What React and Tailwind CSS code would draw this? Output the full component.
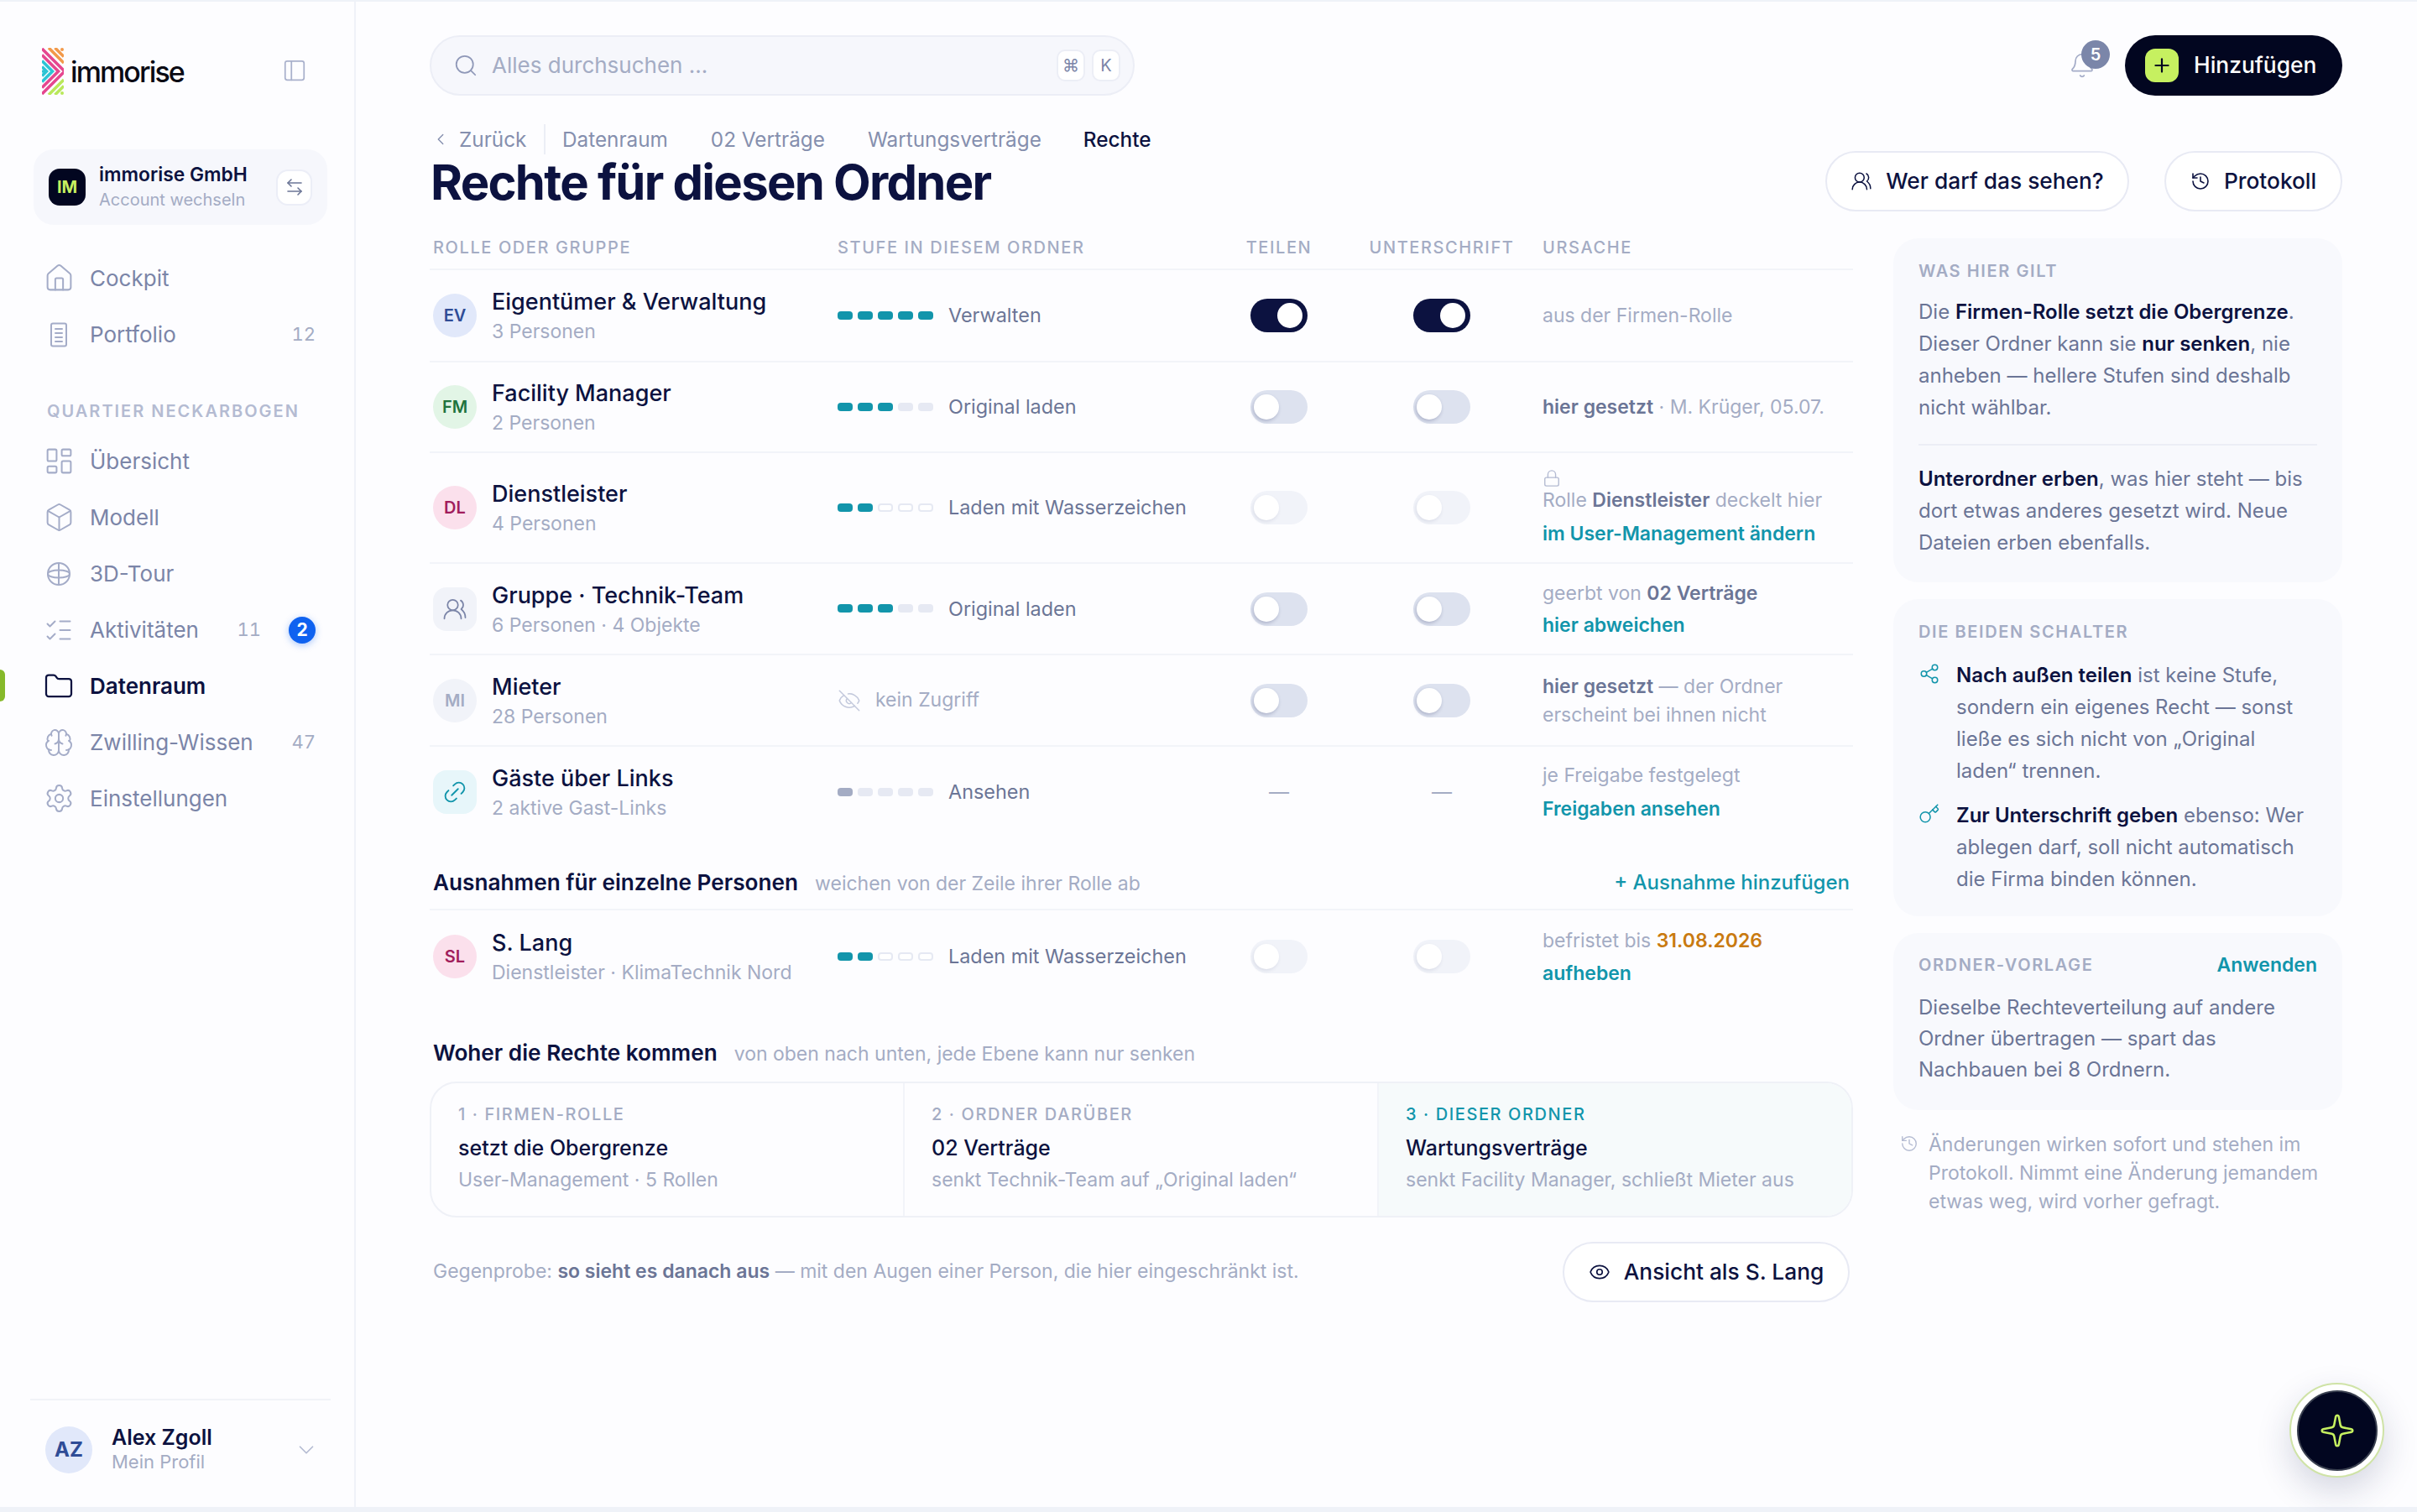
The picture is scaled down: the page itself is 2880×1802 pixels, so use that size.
import React from 'react';
import {
  Home, LayoutDashboard, Box, ListChecks, Folder, Brain, Settings, ArrowLeftRight, PanelLeft,
  Search, Bell, Plus, UsersRound, History, Lock, EyeOff, Link2, Share2, Key, Eye, Sparkle,
  ChevronLeft, ChevronDown,
} from 'lucide-react';

const Logo = () => (
  <svg width="26" height="56" viewBox="0 0 26 56" fill="none" strokeWidth="3.6" className="shrink-0">
    <g stroke="#e5468f">
      <path d="M0 1 L27 28 L0 55" />
      <path d="M0 8.5 L19.5 28 L0 47.5" />
    </g>
    <g stroke="#2cc4d4">
      <path d="M0 15.5 L12.5 28 L0 40.5" />
      <path d="M0 22.5 L5.5 28 L0 33.5" />
    </g>
    <circle cx="1.5" cy="28" r="1.8" fill="#2cc4d4" />
    <g stroke="#f2994a">
      <path d="M8 0 L26 18" />
      <path d="M15.5 0 L26 10.5" />
    </g>
    <circle cx="24" cy="2" r="2" fill="#f2994a" />
    <g stroke="#b9e85a">
      <path d="M8 56 L26 38" />
      <path d="M15.5 56 L26 45.5" />
    </g>
    <circle cx="24" cy="54" r="2" fill="#b9e85a" />
  </svg>
);

const PortfolioIcon = () => (
  <svg width="28" height="30" viewBox="0 0 28 30" fill="none" stroke="currentColor" strokeWidth="2" strokeLinecap="round" className="shrink-0">
    <rect x="5" y="1.5" width="18" height="27" rx="2" />
    <path d="M10 8h8M10 13h8M10 18h8M10 23h8" />
  </svg>
);

const TourIcon = () => (
  <svg width="28" height="28" viewBox="0 0 28 28" fill="none" stroke="currentColor" strokeWidth="2" className="shrink-0">
    <circle cx="14" cy="14" r="13" />
    <ellipse cx="14" cy="14" rx="13" ry="4.5" />
    <path d="M14 1v26" />
  </svg>
);

const nav1 = [
  { label: 'Cockpit', icon: <Home size={37} strokeWidth={1.3} className="shrink-0" /> },
  { label: 'Portfolio', icon: <PortfolioIcon />, count: '12' },
];

const nav2 = [
  { label: 'Übersicht', icon: <LayoutDashboard size={37} strokeWidth={1.3} className="shrink-0" /> },
  { label: 'Modell', icon: <Box size={37} strokeWidth={1.3} className="shrink-0" /> },
  { label: '3D-Tour', icon: <TourIcon /> },
  { label: 'Aktivitäten', icon: <ListChecks size={36} strokeWidth={1.3} className="shrink-0" />, count: '11', badge: '2' },
  { label: 'Datenraum', icon: <Folder size={36} strokeWidth={1.5} className="shrink-0" />, active: true },
  { label: 'Zwilling-Wissen', icon: <Brain size={36} strokeWidth={1.3} className="shrink-0" />, count: '47' },
  { label: 'Einstellungen', icon: <Settings size={37} strokeWidth={1.3} className="shrink-0" /> },
];

const NavItem = ({ item }) => (
  <div className={`relative flex h-[67px] items-center pl-[56px] pr-[46px] ${item.active ? 'font-semibold text-[#0c1240]' : 'text-[#7b85a8]'}`}>
    {item.active && <div className="absolute left-0 top-[14px] h-[38px] w-[6px] rounded-r-md bg-[#86b92a]" />}
    <span className={`flex w-[28px] shrink-0 items-center justify-center ${item.active ? 'text-[#0c1240]' : 'text-[#a4acc8]'}`}>{item.icon}</span>
    <span className="ml-[23px] text-[26px]">{item.label}</span>
    <span className="flex-1" />
    {item.count && <span className={`text-[22px] tabular-nums text-[#a4acc4] ${item.badge ? 'mr-[33px]' : ''}`}>{item.count}</span>}
    {item.badge && (
      <span className="flex h-[32px] w-[32px] items-center justify-center rounded-full bg-[#0f62f0] text-[21px] font-bold text-white shadow-[0_2px_8px_rgba(15,98,240,0.35)]">
        {item.badge}
      </span>
    )}
  </div>
);

const Sidebar = () => (
  <aside className="flex w-[424px] shrink-0 flex-col border-r-2 border-[#eff2f8]">
    <div className="mt-[55px] flex h-[56px] shrink-0 items-center pl-[50px] pr-[56px]">
      <Logo />
      <span className="ml-[8px] text-[34px] font-medium tracking-[-0.055em] text-[#0a0a14]">immorise</span>
      <span className="flex-1" />
      <PanelLeft size={30} strokeWidth={1.4} className="-mt-[2px] text-[#a9b1cc]" />
    </div>
    <div className="ml-[40px] mr-[32px] mt-[65px] flex h-[90px] items-center rounded-[24px] bg-[#f6f7fc] px-[18px]">
      <div className="flex h-[44px] w-[44px] items-center justify-center rounded-[13px] bg-[#020620] text-[20px] font-bold text-[#c6f060]">IM</div>
      <div className="ml-[16px] flex-1">
        <div className="text-[22.8px] font-semibold leading-[30px] text-[#0c1240]">immorise GmbH</div>
        <div className="text-[20px] leading-[30px] text-[#a4acc4]">Account wechseln</div>
      </div>
      <div className="flex h-[43px] w-[43px] items-center justify-center rounded-[14px] border-2 border-[#eceef7] bg-white text-[#6b7596]">
        <ArrowLeftRight size={24} strokeWidth={1.6} />
      </div>
    </div>
    <div className="mt-[30px]">
      {nav1.map((item) => <NavItem key={item.label} item={item} />)}
    </div>
    <div className="ml-[56px] mt-[41px] flex h-[34px] items-center text-[20px] font-semibold tracking-[0.1em] text-[#b4bbd2]">QUARTIER NECKARBOGEN</div>
    <div className="mt-[9px]">
      {nav2.map((item) => <NavItem key={item.label} item={item} />)}
    </div>
    <div className="flex-1" />
    <div className="mb-[40px] ml-[36px] mr-[28px] flex h-[89px] items-end border-t-2 border-[#f1f3f8] pl-[18px] pr-[14px]">
      <div className="flex h-[56px] w-[56px] items-center justify-center rounded-full bg-[#e1e8fa] text-[24px] font-bold text-[#2f4c96]">AZ</div>
      <div className="ml-[23px] flex-1">
        <div className="text-[25px] font-semibold leading-[30px] text-[#0c1240]">Alex Zgoll</div>
        <div className="text-[22px] leading-[28px] text-[#a4acc4]">Mein Profil</div>
      </div>
      <ChevronDown size={30} strokeWidth={1.4} className="mb-[13px] text-[#b4bbd2]" />
    </div>
  </aside>
);

const Bars = ({ level, outlined, grey }) => (
  <div className="flex w-[114px] shrink-0 gap-[6px]">
    {[0, 1, 2, 3, 4].map((i) => {
      let cls = 'bg-[#e6e9f3]';
      if (i < level) cls = grey ? 'bg-[#a4acc4]' : 'bg-[#1295ab]';
      else if (outlined) cls = 'border-2 border-[#e6e9f3] bg-white';
      return <span key={i} className={`h-[10px] w-[18px] rounded-[4px] ${cls}`} />;
    })}
  </div>
);

const Toggle = ({ mode }) => {
  if (mode === 'none') return <span className="text-[24px] text-[#a4acc4]">—</span>;
  if (mode === 'on') {
    return (
      <span className="flex h-[40px] w-[68px] items-center justify-end rounded-full bg-[#0c1240] pr-[6px]">
        <span className="h-[30px] w-[30px] rounded-full bg-white" />
      </span>
    );
  }
  return (
    <span className={`flex h-[40px] w-[68px] items-center rounded-full pl-[4px] ${mode === 'locked' ? 'bg-[#f1f3f9]' : 'bg-[#dde2ef]'}`}>
      <span className={`h-[30px] w-[30px] rounded-full bg-white ${mode === 'locked' ? 'shadow-[-1px_2px_4px_rgba(30,40,90,0.1)]' : 'shadow-[-1px_2px_4px_rgba(30,40,90,0.25)]'}`} />
    </span>
  );
};

const Link_ = ({ children }) => <div className="font-semibold text-[#1295ab]">{children}</div>;
const Strong = ({ children }) => <span className="font-semibold text-[#6b7596]">{children}</span>;

const gridCols = 'grid grid-cols-[486px_444px_164px_224px_378px] items-center';

const Row = ({ r }) => (
  <div className={`${gridCols} ${r.h} ${r.noLine ? '' : 'border-b-2 border-[#f2f4f9]'}`}>
    <div className="flex items-center pl-[4px]">
      <div className={`flex h-[52px] w-[52px] items-center justify-center text-[20px] font-semibold ${r.avatar}`}>{r.initials || r.icon}</div>
      <div className="ml-[18px]">
        <div className="text-[27px] font-medium leading-[38px] text-[#0c1240]">{r.title}</div>
        <div className="text-[23px] leading-[32px] text-[#a4acc4]">{r.sub}</div>
      </div>
    </div>
    <div className="flex items-center">
      {r.noAccess ? (
        <>
          <EyeOff size={28} strokeWidth={1.3} className="text-[#c3c9dc]" />
          <span className="ml-[17px] text-[23px] text-[#a4acc4]">kein Zugriff</span>
        </>
      ) : (
        <>
          <Bars level={r.level} outlined={r.outlined} grey={r.grey} />
          <span className="ml-[18px] text-[23.4px] text-[#6b7596]">{r.stufe}</span>
        </>
      )}
    </div>
    <div className="flex justify-center"><Toggle mode={r.toggle} /></div>
    <div className="flex justify-center"><Toggle mode={r.toggle} /></div>
    <div className="pl-[8px] text-[23px] text-[#a4acc4]">{r.cause}</div>
  </div>
);

const rows = [
  {
    h: 'h-[110px]', initials: 'EV', avatar: 'rounded-full bg-[#e1e8fa] text-[#2f4c96]', title: 'Eigentümer & Verwaltung', sub: '3 Personen',
    level: 5, stufe: 'Verwalten', toggle: 'on', cause: <div>aus der Firmen-Rolle</div>,
  },
  {
    h: 'h-[108px]', initials: 'FM', avatar: 'rounded-full bg-[#e2f5e6] text-[#20733d]', title: 'Facility Manager', sub: '2 Personen',
    level: 3, stufe: 'Original laden', toggle: 'off', cause: <div><Strong>hier gesetzt</Strong> · M. Krüger, 05.07.</div>,
  },
  {
    h: 'h-[132px]', initials: 'DL', avatar: 'rounded-full bg-[#fbe0ec] text-[#a11d5c]', title: 'Dienstleister', sub: '4 Personen',
    level: 2, outlined: true, stufe: 'Laden mit Wasserzeichen', toggle: 'locked',
    cause: (
      <div>
        <Lock size={22} strokeWidth={1.5} className="text-[#b4bbd2]" />
        <div className="leading-[30px]">Rolle <Strong>Dienstleister</Strong> deckelt hier</div>
        <div className="mt-[10px] leading-[30px]"><Link_>im User-Management ändern</Link_></div>
      </div>
    ),
  },
  {
    h: 'h-[109px]', icon: <UsersRound size={30} strokeWidth={1.4} className="text-[#7b85a8]" />, avatar: 'rounded-[16px] bg-[#f1f3f9]', title: 'Gruppe · Technik-Team', sub: '6 Personen · 4 Objekte',
    level: 3, stufe: 'Original laden', toggle: 'off',
    cause: <div><div className="leading-[32px]">geerbt von <Strong>02 Verträge</Strong></div><div className="mt-[6px] leading-[32px]"><Link_>hier abweichen</Link_></div></div>,
  },
  {
    h: 'h-[109px]', initials: 'MI', avatar: 'rounded-full bg-[#f1f3f9] text-[#a4acc4]', title: 'Mieter', sub: '28 Personen',
    noAccess: true, toggle: 'off',
    cause: <div className="leading-[34px]"><Strong>hier gesetzt</Strong> — der Ordner<br />erscheint bei ihnen nicht</div>,
  },
  {
    h: 'h-[108px]', noLine: true, icon: <Link2 size={32} strokeWidth={1.4} className="-rotate-45 text-[#1295ab]" />, avatar: 'rounded-[16px] bg-[#e7f6fa]', title: 'Gäste über Links', sub: '2 aktive Gast-Links',
    level: 1, grey: true, stufe: 'Ansehen', toggle: 'none',
    cause: <div><div className="leading-[32px]">je Freigabe festgelegt</div><div className="mt-[8px] leading-[32px]"><Link_>Freigaben ansehen</Link_></div></div>,
  },
];

const langRow = {
  h: 'h-[110px]', noLine: true, initials: 'SL', avatar: 'rounded-full bg-[#fbe0ec] text-[#a11d5c]', title: 'S. Lang', sub: 'Dienstleister · KlimaTechnik Nord',
  level: 2, outlined: true, stufe: 'Laden mit Wasserzeichen', toggle: 'locked',
  cause: <div><div className="leading-[32px]">befristet bis <span className="font-semibold text-[#c97a10]">31.08.2026</span></div><div className="mt-[7px] leading-[32px]"><Link_>aufheben</Link_></div></div>,
};

const levels = [
  { label: '1 · FIRMEN-ROLLE', title: 'setzt die Obergrenze', sub: 'User-Management · 5 Rollen', w: 'w-[564px]', lc: 'text-[#a4acc4]', bg: 'border-r-2 border-[#f2f4f9]' },
  { label: '2 · ORDNER DARÜBER', title: '02 Verträge', sub: 'senkt Technik-Team auf „Original laden“', w: 'w-[565px]', lc: 'text-[#a4acc4]', bg: 'border-r-2 border-[#f2f4f9]' },
  { label: '3 · DIESER ORDNER', title: 'Wartungsverträge', sub: 'senkt Facility Manager, schließt Mieter aus', w: 'flex-1', lc: 'text-[#1295ab]', bg: 'bg-[#f6fafb]' },
];

const panelLabel = 'text-[20px] font-semibold tracking-[0.08em] text-[#a4acc4]';
const B = ({ children }) => <span className="font-semibold text-[#0c1240]">{children}</span>;

const RightColumn = () => (
  <div className="w-[535px] shrink-0">
    <div className="h-[410px] rounded-[30px] bg-[#f8f9fd] px-[30px] pt-[26px] text-[24px] leading-[38px] text-[#6b7596]">
      <div className={`${panelLabel} leading-[26px]`}>WAS HIER GILT</div>
      <div className="mt-[17px] border-b-2 border-[#eceef6] pb-[24px]">
        Die <B>Firmen-Rolle setzt die Obergrenze</B>.<br />
        Dieser Ordner kann sie <B>nur senken</B>, nie<br />
        anheben — hellere Stufen sind deshalb<br />
        nicht wählbar.
      </div>
      <div className="mt-[21px]">
        <B>Unterordner erben</B>, was hier steht — bis<br />
        dort etwas anderes gesetzt wird. Neue<br />
        Dateien erben ebenfalls.
      </div>
    </div>
    <div className="mt-[20px] h-[378px] rounded-[30px] bg-[#f8f9fd] px-[30px] pt-[26px] text-[24px] leading-[38px] text-[#6b7596]">
      <div className={`${panelLabel} leading-[26px]`}>DIE BEIDEN SCHALTER</div>
      <div className="mt-[20px] flex">
        <Share2 size={26} strokeWidth={1.4} className="mr-[19px] mt-[4px] shrink-0 text-[#1295ab]" />
        <div>
          <B>Nach außen teilen</B> ist keine Stufe,<br />
          sondern ein eigenes Recht — sonst<br />
          ließe es sich nicht von „Original<br />
          laden“ trennen.
        </div>
      </div>
      <div className="mt-[15px] flex">
        <Key size={26} strokeWidth={1.4} className="mr-[19px] mt-[4px] shrink-0 text-[#1295ab]" />
        <div>
          <B>Zur Unterschrift geben</B> ebenso: Wer<br />
          ablegen darf, soll nicht automatisch<br />
          die Firma binden können.
        </div>
      </div>
    </div>
    <div className="mt-[20px] h-[211px] rounded-[30px] bg-[#f8f9fd] px-[30px] pt-[24px] text-[24px] leading-[37px] text-[#6b7596]">
      <div className="flex items-center justify-between leading-[28px]">
        <span className={panelLabel}>ORDNER-VORLAGE</span>
        <span className="text-[23px] font-semibold text-[#1295ab]">Anwenden</span>
      </div>
      <div className="mt-[18px]">
        Dieselbe Rechteverteilung auf andere<br />
        Ordner übertragen — spart das<br />
        Nachbauen bei 8 Ordnern.
      </div>
    </div>
    <div className="mt-[24px] flex pl-[8px] text-[23px] leading-[34px] text-[#a4acc4]">
      <History size={22} strokeWidth={1.5} className="mt-[5px] shrink-0 text-[#b4bbd2]" />
      <div className="ml-[12px]">
        Änderungen wirken sofort und stehen im<br />
        Protokoll. Nimmt eine Änderung jemandem<br />
        etwas weg, wird vorher gefragt.
      </div>
    </div>
  </div>
);

const App = () => (
  <div className="relative flex h-[1802px] w-[2880px] flex-col overflow-hidden bg-[#eff2f8] pb-[6px] pt-[2px] font-['Inter',sans-serif]">
    <div className="flex min-h-0 flex-1 bg-[#fdfdff]">
      <Sidebar />
      <main className="min-w-0 flex-1 pl-[88px] pr-[89px]">
        {/* Suche und Aktionen */}
        <div className="mt-[40px] flex h-[72px] items-center">
          <div className="flex h-full w-[840px] items-center rounded-full border-2 border-[#eceef6] bg-[#f6f7fc] pl-[26px] pr-[15px]">
            <Search size={30} strokeWidth={1.4} className="text-[#8f98b8]" />
            <span className="-mt-[2px] ml-[16px] flex-1 text-[26px] text-[#a4acc4]">Alles durchsuchen ...</span>
            <span className="flex h-[38px] w-[34px] items-center justify-center rounded-[10px] border-2 border-[#eceef6] bg-white text-[20px] text-[#7b85a8]">⌘</span>
            <span className="ml-[8px] flex h-[38px] w-[34px] items-center justify-center rounded-[10px] border-2 border-[#eceef6] bg-white text-[20px] text-[#7b85a8]">K</span>
          </div>
          <div className="flex-1" />
          <div className="relative mr-[18px] h-[72px] w-[47px]">
            <Bell size={32} strokeWidth={1.3} className="absolute -left-[2px] top-[20px] text-[#a4acc8]" />
            <span className="absolute left-[13px] top-[6px] flex h-[34px] w-[34px] items-center justify-center rounded-full bg-[#7b86a9] text-[20px] font-semibold text-white">5</span>
          </div>
          <div className="flex h-full w-[259px] items-center rounded-full bg-[#020620] pl-[24px]">
            <span className="flex h-[40px] w-[40px] items-center justify-center rounded-[12px] bg-[#c6f060] text-[#020620]"><Plus size={26} strokeWidth={2} /></span>
            <span className="ml-[18px] text-[26.4px] font-medium text-white">Hinzufügen</span>
          </div>
        </div>

        {/* Kopf */}
        <div className="flex h-[170px] justify-between pt-[34px]">
          <div>
            <div className="flex h-[36px] items-center text-[24.3px] text-[#858fae]">
              <ChevronLeft size={22} strokeWidth={1.5} className="ml-[2px]" />
              <span className="ml-[11px] w-[103px] border-r-2 border-[#eceef6] leading-[36px]">Zurück</span>
              <span className="ml-[20px]">Datenraum</span>
              <span className="ml-[51px]">02 Verträge</span>
              <span className="ml-[51px]">Wartungsverträge</span>
              <span className="ml-[50px] font-medium text-[#0c1240]">Rechte</span>
            </div>
            <h1 className="-mt-[2px] ml-[1px] text-[58px] font-bold leading-[70px] tracking-[-0.03em] text-[#0c1240]">Rechte für diesen Ordner</h1>
          </div>
          <div className="mt-[32px] flex gap-[42px]">
            <div className="flex h-[72px] w-[362px] items-center justify-center rounded-full border-2 border-[#e8eaf4] bg-white text-[26.3px] font-medium text-[#0c1240]">
              <UsersRound size={26} strokeWidth={1.4} className="mr-[16px]" />Wer darf das sehen?
            </div>
            <div className="flex h-[72px] w-[212px] items-center justify-center rounded-full border-2 border-[#e8eaf4] bg-white text-[26.3px] font-medium text-[#0c1240]">
              <History size={24} strokeWidth={1.6} className="mr-[16px]" />Protokoll
            </div>
          </div>
        </div>

        <div className="flex justify-between">
          {/* Tabelle */}
          <div className="w-[1696px]">
            <div className={`${gridCols} h-[38px] border-b-2 border-[#f2f4f9] pb-[14px] text-[20px] font-medium leading-[22px] tracking-[0.08em] text-[#a4acc4]`}>
              <div className="pl-[4px]">ROLLE ODER GRUPPE</div>
              <div>STUFE IN DIESEM ORDNER</div>
              <div className="text-center">TEILEN</div>
              <div className="text-center">UNTERSCHRIFT</div>
              <div className="pl-[8px]">URSACHE</div>
            </div>
            {rows.map((r) => <Row key={r.title} r={r} />)}

            <div className="flex h-[87px] items-center justify-between border-b-2 border-[#f2f4f9] px-[4px] pt-[22px]">
              <div className="flex items-baseline">
                <span className="text-[26.2px] font-semibold text-[#0c1240]">Ausnahmen für einzelne Personen</span>
                <span className="ml-[20px] text-[23px] text-[#a4acc4]">weichen von der Zeile ihrer Rolle ab</span>
              </div>
              <span className="text-[24px] font-medium text-[#1295ab]">+ Ausnahme hinzufügen</span>
            </div>
            <Row r={langRow} />

            <div className="mt-[40px] flex h-[34px] items-baseline pl-[4px]">
              <span className="text-[26.2px] font-semibold text-[#0c1240]">Woher die Rechte kommen</span>
              <span className="ml-[20px] text-[23px] text-[#a4acc4]">von oben nach unten, jede Ebene kann nur senken</span>
            </div>
            <div className="mt-[20px] flex h-[162px] overflow-hidden rounded-[32px] border-2 border-[#eff1f7]">
              {levels.map((l) => (
                <div key={l.label} className={`${l.w} ${l.bg} pl-[32px] pt-[24px]`}>
                  <div className={`text-[20px] font-medium leading-[26px] tracking-[0.08em] ${l.lc}`}>{l.label}</div>
                  <div className="mt-[11px] text-[25px] font-medium leading-[32px] text-[#0c1240]">{l.title}</div>
                  <div className="mt-[6px] text-[23px] leading-[32px] text-[#a4acc4]">{l.sub}</div>
                </div>
              ))}
            </div>

            <div className="mt-[29px] flex items-center justify-between pl-[4px] pr-[4px]">
              <div className="-mt-[2px] text-[23px] text-[#a4acc4]">
                Gegenprobe: <Strong>so sieht es danach aus</Strong> — mit den Augen einer Person, die hier eingeschränkt ist.
              </div>
              <div className="flex h-[72px] w-[342px] items-center justify-center rounded-full border-2 border-[#e8eaf4] bg-white text-[26.3px] font-medium text-[#0c1240]">
                <Eye size={26} strokeWidth={1.5} className="mr-[16px]" />Ansicht als S. Lang
              </div>
            </div>
          </div>
          <RightColumn />
        </div>
      </main>
    </div>

    {/* KI-Knopf */}
    <div className="absolute left-[2728px] top-[1648px] flex h-[113px] w-[113px] items-center justify-center rounded-full border-2 border-[#cfe3a6] bg-white shadow-[0_16px_40px_rgba(30,40,90,0.18)]">
      <div className="flex h-[96px] w-[96px] items-center justify-center rounded-full border-2 border-[#3a4050] bg-[#020620]">
        <Sparkle size={44} strokeWidth={1.4} className="text-[#c6f060]" />
      </div>
    </div>
  </div>
);

export default App;
